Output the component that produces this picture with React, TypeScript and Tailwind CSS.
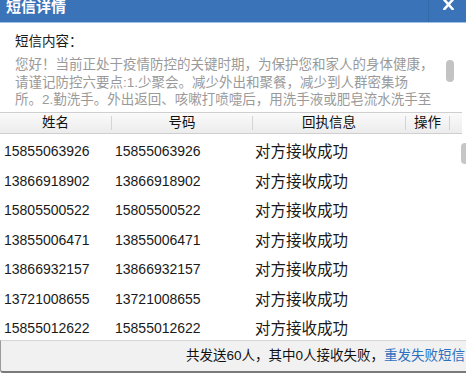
import React from "react";

const rows = [
  "15855063926",
  "13866918902",
  "15805500522",
  "13855006471",
  "13866932157",
  "13721008655",
  "15855012622",
];

export default function App() {
  return (
    <div
      className="w-[466px] h-[377px] bg-white overflow-hidden flex flex-col"
      style={{ fontFamily: "'Liberation Sans', 'Noto Sans CJK SC', sans-serif" }}
    >
      {/* title bar */}
      <div className="h-[23px] shrink-0 bg-[#3b73b8] border-b border-[#9fc0e6] flex items-start">
        <div className="pl-[6px] mt-[-1px] text-[15px] leading-[16px] font-bold text-white">
          短信详情
        </div>
        <div className="ml-auto h-full w-[38px] border-l border-[#3469aa] flex items-start justify-center">
          <svg width="11" height="10" viewBox="0 0 11 10" className="ml-[2px]">
            <path d="M1.5 0 L9.5 9 M9.5 0 L1.5 9" stroke="white" strokeWidth="2.6" strokeLinecap="square" />
          </svg>
        </div>
      </div>

      {/* message content */}
      <div className="shrink-0 pl-[15px] pt-[10px]">
        <div className="text-[13.5px] leading-[18px] text-[#1a1a1a]">短信内容：</div>
      </div>
      <div className="shrink-0 h-[56px] mt-[5px] flex pl-[15px] overflow-hidden">
        <div className="text-[13.5px] leading-[17.5px] text-[#9a9a9a] whitespace-nowrap w-[428px] overflow-hidden">
          <div>您好！当前正处于疫情防控的关键时期，为保护您和家人的身体健康，</div>
          <div>请谨记防控六要点:1.少聚会。减少外出和聚餐，减少到人群密集场</div>
          <div>所。2.勤洗手。外出返回、咳嗽打喷嚏后，用洗手液或肥皂流水洗手至</div>
        </div>
        <div className="w-[8px] ml-[3px] mt-[4px] h-[22px] rounded-full bg-[#c3c3c3]" />
      </div>

      {/* table header */}
      <div className="shrink-0 h-[22px] border-t border-b border-[#cfcfcf] bg-gradient-to-b from-[#fafafa] to-[#ececec] flex items-center text-[13.5px] text-[#111] mr-[4px]">
        <div className="w-[112px] text-center border-r border-[#d4d4d4] leading-[14px]">姓名</div>
        <div className="w-[141px] text-center border-r border-[#d4d4d4] leading-[14px]">号码</div>
        <div className="w-[153px] text-center border-r border-[#d4d4d4] leading-[14px]">回执信息</div>
        <div className="w-[44px] text-center border-r border-[#d4d4d4] leading-[14px]">操作</div>
      </div>

      {/* rows */}
      <div className="flex-1 relative overflow-hidden pt-[3px]">
        {rows.map((n) => (
          <div key={n} className="h-[29.5px] flex items-center text-[#1a1a1a]">
            <div className="w-[112px] pl-[4px] text-[14px]">{n}</div>
            <div className="w-[141px] pl-[3px] text-[14px]">{n}</div>
            <div className="w-[153px] pl-[2px] text-[15.5px]">对方接收成功</div>
          </div>
        ))}
        <div className="absolute right-0 top-[9px] w-[5px] h-[21px] rounded-l-[4px] bg-[#c6c6c6]" />
      </div>

      {/* footer */}
      <div className="shrink-0 h-[33px] bg-[#f1f1f1] border-t border-[#d6d6d6] border-l border-l-[#9a9a9a] border-b-2 border-b-[#7a7a7a] rounded-bl-[3px] flex items-center pl-[185px] overflow-hidden">
        <div className="whitespace-nowrap text-[13.5px] leading-[18px] text-[#111]">
          共发送60人，其中0人接收失败，
          <span className="text-[#2d6fc0]">重发失败短信</span>
        </div>
      </div>
      <div className="h-[4px] shrink-0 bg-white" />
    </div>
  );
}
